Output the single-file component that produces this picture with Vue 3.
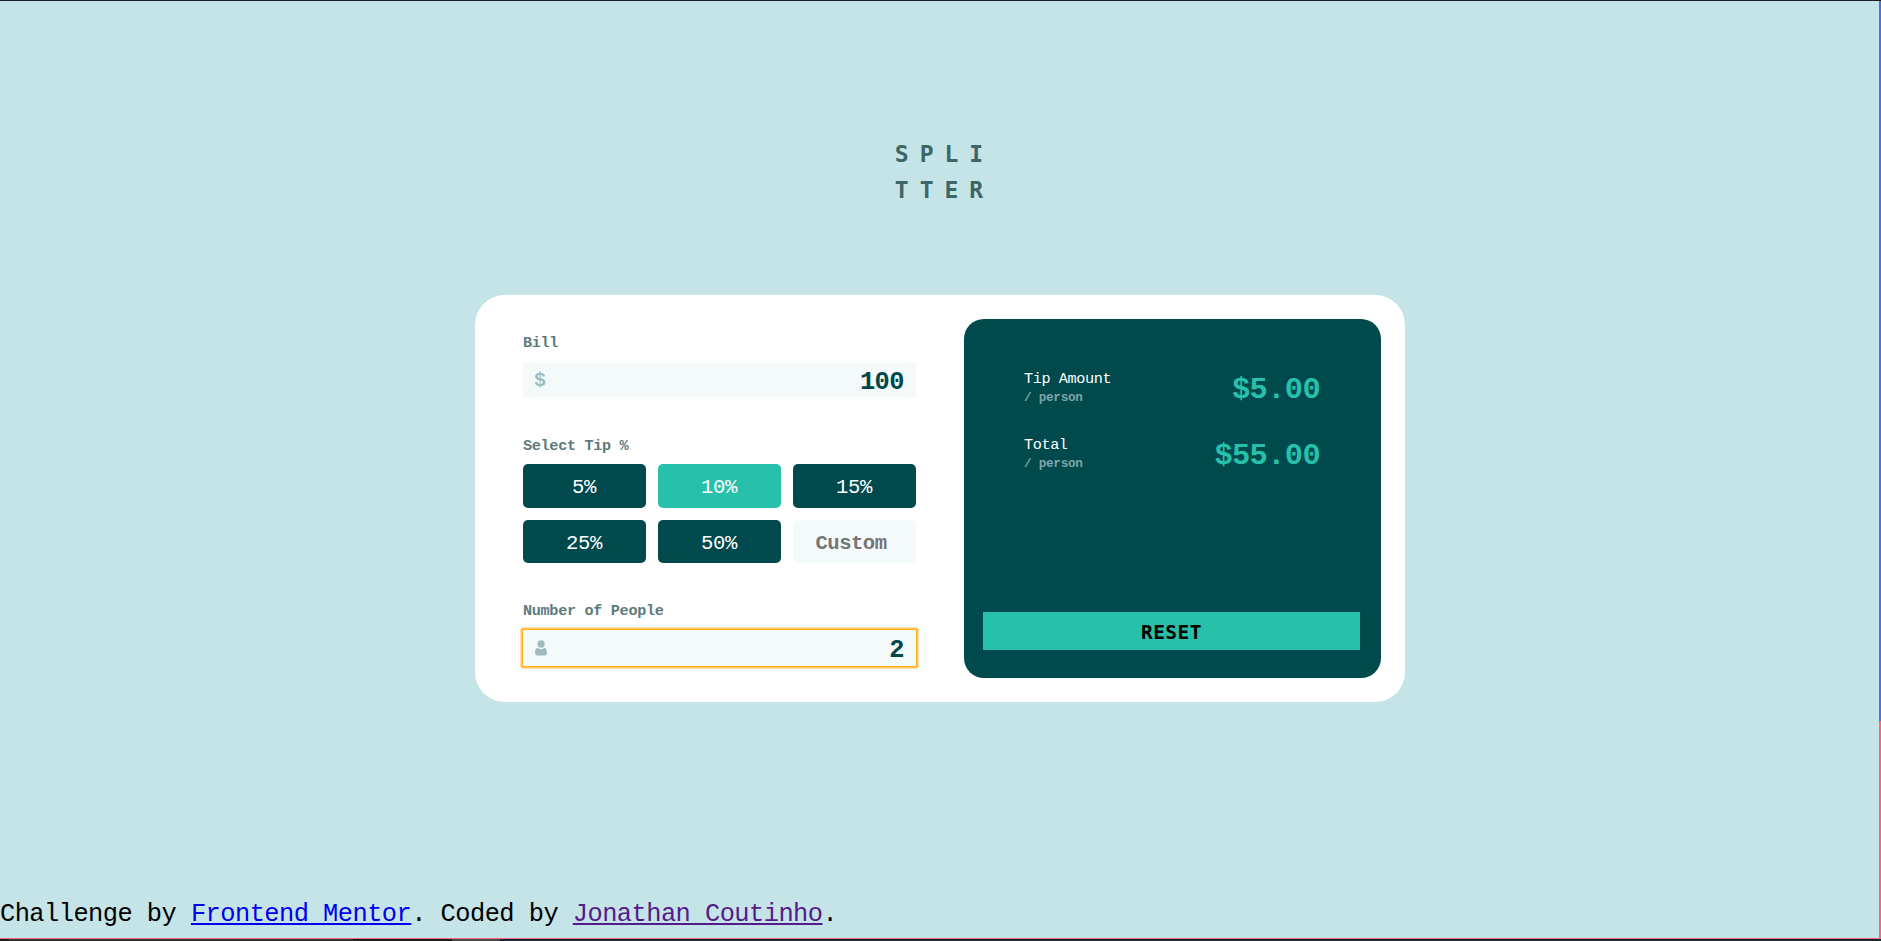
<script setup>
import { computed, ref } from 'vue'

const bill = ref('100')
const people = ref('2')
const custom = ref('')
const selected = ref(10)
const tips = [5, 10, 15, 25, 50]

const tipAmount = computed(() => {
  const value = (Number(bill.value) * selected.value) / 100 / (Number(people.value) || 1)
  return '$' + value.toFixed(2)
})
const total = computed(() => {
  const value = (Number(bill.value) * (1 + selected.value / 100)) / (Number(people.value) || 1)
  return '$' + value.toFixed(2)
})

function reset() {
  bill.value = ''
  people.value = ''
  custom.value = ''
}
</script>

<template>
  <div class="screen">
    <main class="page">
      <h1 class="title">SPLI<br />TTER</h1>

      <section class="card">
        <form class="form" @submit.prevent>
          <label class="label" for="bill">Bill</label>
          <div class="field">
            <span class="dollar">$</span>
            <input id="bill" v-model="bill" class="input" type="text" />
          </div>

          <div class="label label-tip">Select Tip %</div>
          <div class="tips">
            <button
              v-for="tip in tips"
              :key="tip"
              type="button"
              class="tip"
              :class="{ active: tip === selected }"
              @click="selected = tip"
            >{{ tip }}%</button>
            <input v-model="custom" class="custom" type="text" placeholder="Custom" />
          </div>

          <label class="label label-people" for="people">Number of People</label>
          <div class="field focused">
            <svg class="person" width="12" height="16" viewBox="0 0 12 16">
              <circle cx="6.1" cy="3.9" r="3.6" />
              <path d="M2.5 7.7C3.5 8.5 4.7 9 6 9s2.500-.5 3.500-1.300C11.200 8.300 12 10.100 12 12.200c0 2.300-.9 3.400-2.700 3.400H2.700C.9 15.600 0 14.500 0 12.200 0 10.100.8 8.300 2.500 7.700z" />
            </svg>
            <input id="people" v-model="people" class="input" type="text" />
          </div>
        </form>

        <aside class="result">
          <div class="row">
            <div>
              <div class="name">Tip Amount</div>
              <div class="per">/ person</div>
            </div>
            <div class="amount">{{ tipAmount }}</div>
          </div>
          <div class="row">
            <div>
              <div class="name">Total</div>
              <div class="per">/ person</div>
            </div>
            <div class="amount">{{ total }}</div>
          </div>
          <button type="button" class="reset" @click="reset">RESET</button>
        </aside>
      </section>

      <footer class="footer">Challenge by <a class="link" href="#">Frontend Mentor</a>. Coded by <a class="link visited" href="#">Jonathan Coutinho</a>.</footer>
    </main>
    <div class="side"></div>
    <div class="bottom"></div>
  </div>
</template>

<style>
body {
  margin: 0;
  overflow: hidden;
}
</style>

<style scoped>
.screen {
  box-sizing: border-box;
  width: 100vw;
  height: 100vh;
  display: grid;
  grid-template-columns: 1fr 2px;
  grid-template-rows: 1fr 3px;
  border-top: 1px solid #1b1b26;
  background: #c5e4e7;
  font-family: 'Liberation Mono', monospace;
}
.side {
  background: linear-gradient(#546de5 720px, #f3697f 720px);
}
.bottom {
  grid-column: 1 / 3;
  box-sizing: border-box;
  border-top: 1px solid #f3697f;
  background: linear-gradient(90deg, #1c1e22 9px, #34363a 9px, #34363a 353px, #1c1e22 353px, #1c1e22 452px, #4a4b50 452px, #4a4b50 500px, #1b2433 500px);
}
.page {
  display: flex;
  flex-direction: column;
  align-items: center;
  min-height: 0;
}
.title {
  margin: 135px 0 0 10px;
  font-family: 'DejaVu Sans Mono', monospace;
  font-size: 23px;
  line-height: 36px;
  font-weight: 700;
  letter-spacing: 11px;
  color: #3d6666;
}
.card {
  box-sizing: border-box;
  width: 930px;
  height: 407px;
  margin: 87px 0 0 1px;
  padding: 24px 24px 24px 48px;
  display: flex;
  justify-content: space-between;
  background: #fff;
  border-radius: 30px;
}
.form {
  width: 393px;
  padding-top: 12px;
}
.label {
  display: block;
  height: 31px;
  font-size: 15.2px;
  line-height: 25px;
  letter-spacing: -0.33px;
  font-weight: 700;
  color: #5e7a7d;
}
.label-tip {
  height: 30px;
  margin-top: 36px;
}
.label-people {
  margin-top: 36px;
}
.field {
  box-sizing: border-box;
  height: 36px;
  padding: 0 12px 0 12px;
  display: flex;
  align-items: center;
  background: #f4fafa;
}
.focused {
  outline: 1px solid #ffad1f;
  box-shadow: 0 0 2px 2px #ffa90f;
}
.dollar {
  font-size: 20px;
  line-height: 34px;
  padding-top: 2px;
  margin-left: -1px;
  color: #9ebbbd;
  font-weight: 700;
}
.person {
  fill: #9ebbbd;
  flex: none;
}
.input {
  box-sizing: border-box;
  flex: 1;
  min-width: 0;
  height: 36px;
  padding: 4px 0 0;
  border: 0;
  outline: 0;
  background: transparent;
  text-align: right;
  font: 700 25.4px/32px 'Liberation Mono', monospace;
  letter-spacing: -0.55px;
  color: #00474b;
}
.tips {
  display: grid;
  grid-template-columns: repeat(3, 123px);
  grid-template-rows: 44px 43px;
  gap: 12px;
}
.tip,
.custom {
  box-sizing: border-box;
  width: 123px;
  padding: 3px 1px 0 0;
  border: 0;
  border-radius: 5px;
  background: #00494d;
  color: #fff;
  text-align: center;
  font: 400 20.6px 'Liberation Mono', monospace;
  letter-spacing: -0.3px;
}
.tip.active {
  background: #26c0ab;
}
.custom {
  padding-right: 7px;
  background: #f4fafa;
  font-weight: 700;
  letter-spacing: -0.5px;
}
.custom::placeholder {
  color: #757575;
  opacity: 1;
}
.result {
  box-sizing: border-box;
  width: 417px;
  height: 359px;
  padding: 47px 21px 28px 19px;
  display: flex;
  flex-direction: column;
  background: #00494d;
  border-radius: 20px;
}
.row {
  height: 66px;
  padding: 0 40px 0 41px;
  display: flex;
  justify-content: space-between;
}
.name {
  padding-top: 2px;
  font-size: 15.2px;
  line-height: 23px;
  letter-spacing: -0.4px;
  color: #fff;
}
.per {
  font-size: 12.7px;
  line-height: 13px;
  letter-spacing: -0.28px;
  font-weight: 700;
  color: #7fa5a7;
}
.amount {
  font-size: 30.4px;
  line-height: 49px;
  letter-spacing: -0.64px;
  font-weight: 700;
  color: #26c0ab;
}
.reset {
  width: 377px;
  height: 38px;
  margin-top: auto;
  padding: 2px 0 0;
  border: 0;
  background: #26c0ab;
  color: #000;
  font: 700 19.5px 'DejaVu Sans Mono', monospace;
  letter-spacing: 0.5px;
}
.footer {
  align-self: flex-start;
  margin-top: 195px;
  font-size: 25.4px;
  line-height: 36px;
  letter-spacing: -0.55px;
  color: #000;
  white-space: nowrap;
}
.link {
  color: #0000ee;
  text-decoration: underline;
  text-decoration-thickness: 2px;
  text-underline-offset: 2px;
}
.visited {
  color: #551a8b;
}
</style>
